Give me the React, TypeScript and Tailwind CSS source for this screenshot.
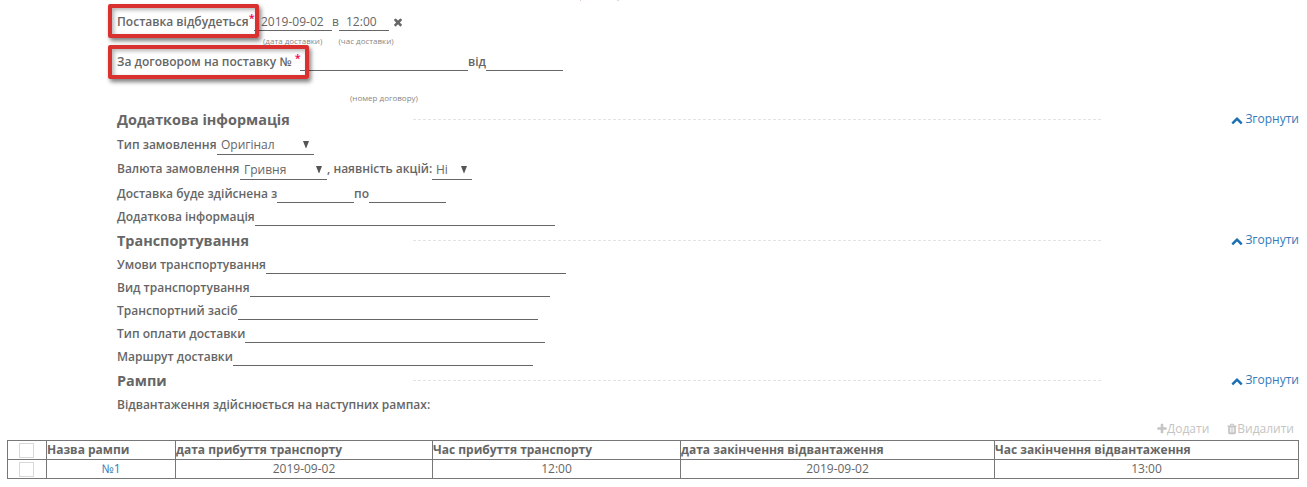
import type { ReactNode } from 'react';

const icons = {
  up: 'M1683 1331l-166 165q-19 19-45 19t-45-19l-531-531-531 531q-19 19-45 19t-45-19l-166-165q-19-19-19-45.5t19-45.5l742-741q19-19 45-19t45 19l742 741q19 19 19 45.5t-19 45.5z',
  plus: 'M1600 736v192q0 40-28 68t-68 28h-416v416q0 40-28 68t-68 28h-192q-40 0-68-28t-28-68v-416h-416q-40 0-68-28t-28-68v-192q0-40 28-68t68-28h416v-416q0-40 28-68t68-28h192q40 0 68 28t28 68v416h416q40 0 68 28t28 68z',
  times:
    'M1490 1322q0 40-28 68l-136 136q-28 28-68 28t-68-28l-294-294-294 294q-28 28-68 28t-68-28l-136-136q-28-28-28-68t28-68l294-294-294-294q-28-28-28-68t28-68l136-136q28-28 68-28t68 28l294 294 294-294q28-28 68-28t68 28l136 136q28 28 28 68t-28 68l-294 294 294 294q28 28 28 68z',
  trash:
    'M704 1376v-704q0-14-9-23t-23-9h-64q-14 0-23 9t-9 23v704q0 14 9 23t23 9h64q14 0 23-9t9-23zm256 0v-704q0-14-9-23t-23-9h-64q-14 0-23 9t-9 23v704q0 14 9 23t23 9h64q14 0 23-9t9-23zm256 0v-704q0-14-9-23t-23-9h-64q-14 0-23 9t-9 23v704q0 14 9 23t23 9h64q14 0 23-9t9-23zm-544-992h448l-48-117q-7-9-17-11h-317q-10 2-17 11zm928 32v64q0 14-9 23t-23 9h-96v948q0 83-47 143.5t-113 60.5h-832q-66 0-113-58.5t-47-141.5v-952h-96q-14 0-23-9t-9-23v-64q0-14 9-23t23-9h309l70-167q15-37 54-63t79-26h320q40 0 79 26t54 63l70 167h309q14 0 23 9t9 23z',
};

function Icon({ name, className }: { name: keyof typeof icons; className: string }) {
  return (
    <svg viewBox="0 0 1792 1792" fill="currentColor" className={`${className} shrink-0`}>
      <path d={icons[name]} />
    </svg>
  );
}

function Label({ width, children, lift = '' }: { width: string; children: ReactNode; lift?: string }) {
  return <span className={`${width} ${lift} shrink-0 font-semibold whitespace-nowrap`}>{children}</span>;
}

function Field({ width, children }: { width: string; children?: ReactNode }) {
  return (
    <span className={`${width} flex h-[18px] shrink-0 items-start border-b border-[#666] pl-[7px]`}>{children}</span>
  );
}

function Select({ width, children }: { width: string; children: ReactNode }) {
  return (
    <span className={`${width} flex h-5 shrink-0 items-center justify-between border-b border-[#666] pr-[5px] pl-1`}>
      {children}
      <svg width="6" height="7" viewBox="0 0 6 7">
        <path d="M0 0h6L3.3 7h-.6z" fill="#555" />
      </svg>
    </span>
  );
}

function Star() {
  return <sup className="top-[-4px] text-[11px] leading-none font-semibold text-[#f00050]">*</sup>;
}

function Heading({ title, height }: { title: string; height: string }) {
  return (
    <div className={`${height} flex items-center`}>
      <h2 className="w-[296px] text-[14.4px] font-bold">{title}</h2>
      <svg width="690" height="1" className="mb-px shrink-0">
        <path d="M0 .5h690" stroke="#e3e3e3" strokeDasharray="3 2" />
      </svg>
      <a className="mr-2 mb-[2px] ml-auto flex items-center gap-[2px] text-[#337ab7]">
        <Icon name="up" className="mt-px size-3 text-[#1a6fb5]" />
        Згорнути
      </a>
    </div>
  );
}

const transport = [
  ['w-[149px]', 'Умови транспортування'],
  ['w-[133px]', 'Вид транспортування'],
  ['w-[121px]', 'Транспортний засіб'],
  ['w-[128px]', 'Тип оплати доставки'],
  ['w-[116px]', 'Маршрут доставки'],
];

const th = 'border border-[#777] p-0 text-left font-bold';
const td = 'border border-[#777] p-0 text-center';
const check = 'mr-auto ml-[11px] block size-[15px] border border-[#d8d8d8] bg-white';
const mark =
  'absolute border-4 border-[#d93030] rounded-[2px] shadow-[2px_3px_4px_rgba(0,0,0,.5),inset_2px_2px_4px_rgba(0,0,0,.3)]';

export default function App() {
  return (
    <main className="relative h-[487px] w-[1307px] overflow-hidden bg-white font-['Open_Sans',sans-serif] text-[12px] leading-[18px] text-[#666]">
      <div className={`${mark} top-[4px] left-[108px] h-[34px] w-[151px]`} />
      <div className={`${mark} top-[45px] left-[108px] h-[34px] w-[201px]`} />
      <div className="pl-[117px]">
        <div className="flex h-[31px] items-end">
          <Label width="w-[137px]">Поставка відбудеться<Star /></Label>
          <Field width="w-[78px]">2019-09-02</Field>
          <span className="w-[7px]">в</span>
          <Field width="w-[50px]">12:00</Field>
          <Icon name="times" className="mb-[3px] ml-[3px] size-3" />
        </div>
        <div className="flex h-4 items-center pt-1 text-[8px] text-[#888]">
          <span className="ml-[146px] w-[75.5px]">(дата доставки)</span>
          <span>(час доставки)</span>
        </div>
        <div className="flex h-6 items-end">
          <Label width="w-[183px]">За договором на поставку № <Star /></Label>
          <Field width="w-[168px]" />
          <Label width="w-[18px]">від</Label>
          <Field width="w-[77px]" />
        </div>
        <div className="h-[38px] pt-[18px] pl-[233px] text-[8px] text-[#888]">(номер договору)</div>

        <Heading title="Додаткова інформація" height="h-[22px]" />
        <div className="flex h-6 items-end">
          <Label width="w-[100px]" lift="mb-px">Тип замовлення</Label>
          <Select width="w-[97px]">Оригінал</Select>
        </div>
        <div className="flex h-[25px] items-end">
          <Label width="w-[123px]" lift="mb-[2px]">Валюта замовлення</Label>
          <Select width="w-[87px]">Гривня</Select>
          <Label width="w-[105px]" lift="mb-[2px]">, наявність акцій:</Label>
          <Select width="w-[40px]">Ні</Select>
        </div>
        <div className="flex h-[23px] items-end">
          <Label width="w-[160px]">Доставка буде здійснена з</Label>
          <Field width="w-[77px]" />
          <Label width="w-[15px]">по</Label>
          <Field width="w-[77px]" />
        </div>
        <div className="flex h-[23px] items-end">
          <Label width="w-[138px]">Додаткова інформація</Label>
          <Field width="w-[300px]" />
        </div>

        <Heading title="Транспортування" height="h-[30px]" />
        <div className="-mt-[5px]">
          {transport.map(([width, text]) => (
            <div key={text} className="flex h-[23px] items-end">
              <Label width={width}>{text}</Label>
              <Field width="w-[300px]" />
            </div>
          ))}
        </div>

        <Heading title="Рампи" height="h-[30px]" />
        <p className="h-6 font-semibold">Відвантаження здійснюється на наступних рампах:</p>
      </div>
      <div className="flex h-5 items-start justify-end gap-[17px] pr-[13px] text-[#c4c4c4]">
        <span className="flex items-center"><Icon name="plus" className="-mr-px size-3" />Додати</span>
        <span className="flex items-center"><Icon name="trash" className="-mr-px size-3" />Видалити</span>
      </div>
      <table className="ml-[7px] w-[1292px] table-fixed border-collapse leading-[18px]">
        <colgroup>
          <col className="w-[39px]" />
          <col className="w-[129px]" />
          <col className="w-[257px]" />
          <col className="w-[248px]" />
          <col className="w-[314px]" />
          <col className="w-[304px]" />
        </colgroup>
        <tbody>
          <tr className="h-[19px]">
            <th className={th}><span className={check} /></th>
            <th className={th}>Назва рампи</th>
            <th className={th}>дата прибуття транспорту</th>
            <th className={th}>Час прибуття транспорту</th>
            <th className={th}>дата закінчення відвантаження</th>
            <th className={th}>Час закінчення відвантаження</th>
          </tr>
          <tr className="h-[19px]">
            <td className={td}><span className={check} /></td>
            <td className={`${td} text-[#337ab7]`}>№1</td>
            <td className={td}>2019-09-02</td>
            <td className={td}>12:00</td>
            <td className={td}>2019-09-02</td>
            <td className={td}>13:00</td>
          </tr>
        </tbody>
      </table>
      <span className="absolute top-0 left-[580px] size-px bg-[#e8c8c8]" />
      <span className="absolute top-0 left-[617px] h-px w-[2px] bg-[#dcdce8]" />
    </main>
  );
}
